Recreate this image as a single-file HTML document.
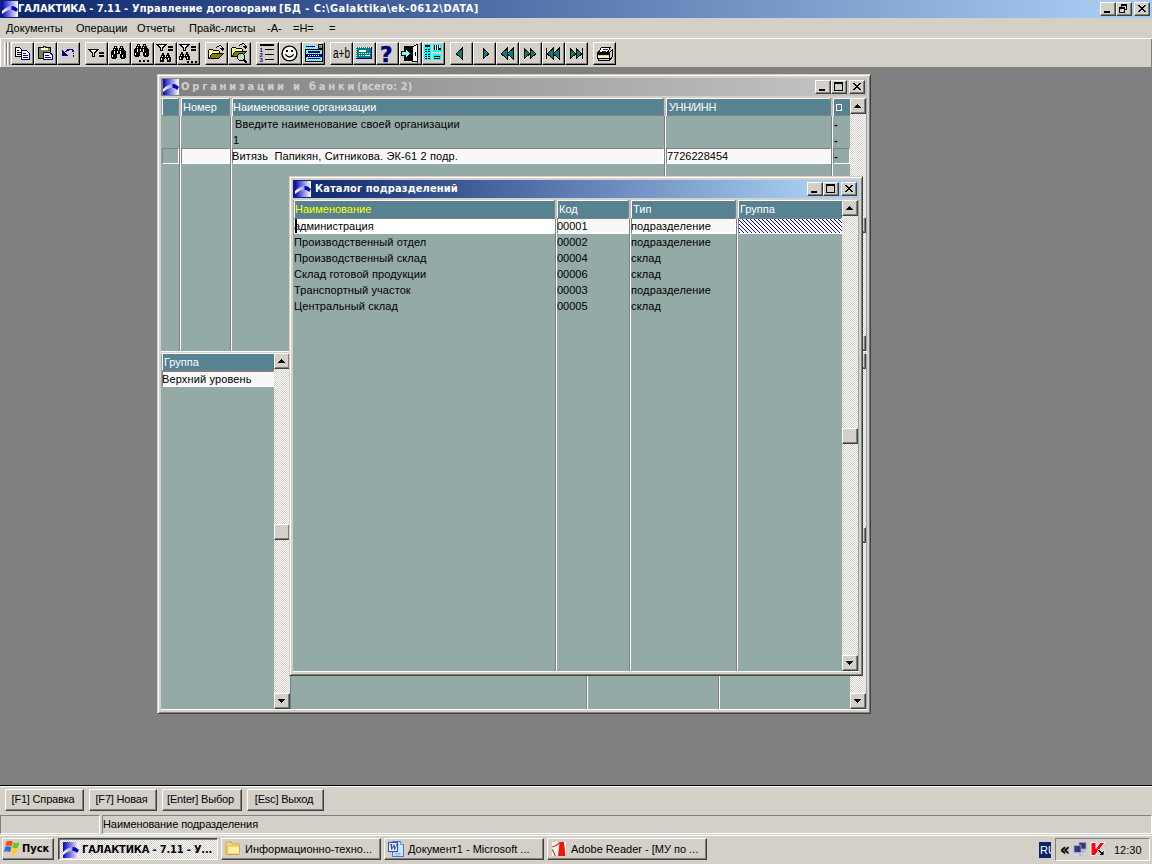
<!DOCTYPE html><html lang="ru"><head><meta charset="utf-8"><title>ГАЛАКТИКА</title><style>
html,body{margin:0;padding:0}
body{width:1152px;height:864px;overflow:hidden;background:#808080;position:relative;font:11px/14px "Liberation Sans",sans-serif;color:#000}
div,span,svg{position:absolute;box-sizing:border-box}
span{white-space:pre;line-height:14px}
.tb{font:bold 11px/14px "DejaVu Sans Condensed","Liberation Sans",sans-serif;letter-spacing:.17px}
.face{background:#d4d0c8}
.btn{background:#d4d0c8;border:1px solid;border-color:#fff #404040 #404040 #fff;box-shadow:inset -1px -1px 0 #808080}
.tbtn{background:#d4d0c8;border:1px solid;border-color:#fff #000 #000 #fff;box-shadow:inset -1px -1px 0 #808080}
.win{background:#d4d0c8;border:1px solid;border-color:#d4d0c8 #404040 #404040 #d4d0c8;box-shadow:inset 1px 1px 0 #fff,inset -1px -1px 0 #808080}
.sunk{border:1px solid;border-color:#808080 #fff #fff #808080}
.track{background:repeating-conic-gradient(#fff 0 25%,#d4d0c8 0 50%) 0 0/2px 2px}
.hd{background:#568292}
.bd{background:#94aaa6}
.w{color:#fff}
</style></head><body>
<div style="left:0px;top:0px;width:1152px;height:18px;background:linear-gradient(90deg,#0a246a 0,#a6caf0 1100px)"></div>
<svg style="left:2px;top:1px" width="16" height="16" viewBox="0 0 16 16"><defs><linearGradient id="g0" x1="0" x2="1" y1="0" y2="0"><stop offset="0" stop-color="#0404c0"/><stop offset="1" stop-color="#ffffff"/></linearGradient><linearGradient id="g0b" x1="0" x2="1" y1="0" y2="0"><stop offset="0" stop-color="#ffffff"/><stop offset="1" stop-color="#9898e0"/></linearGradient></defs><rect width="16" height="16" fill="url(#g0)"/><path d="M0 10C3 7.200 6.500 5.300 10 5L10 8.600C6.500 9 3.500 10.200 .5 12.800L0 12.800z" fill="url(#g0b)"/><path d="M9.500 5.200C11.500 4.800 13.500 6 16 8L14.200 11C12.500 9.500 11 8.800 9.500 8.800z" fill="#0404b8"/></svg>
<span class="tb w" style="left:18px;top:2px;letter-spacing:-.09px">ГАЛАКТИКА - 7.11 - </span>
<span class="tb w" style="left:132px;top:2px;">Управление договорами </span>
<span class="tb w" style="left:279px;top:2px;letter-spacing:.47px">[БД - C:\Galaktika\ek-0612\DATA]</span>
<div class="btn" style="left:1100px;top:2px;width:16px;height:14px;"><svg style="left:0;top:0" width="14" height="12" viewBox="0 0 14 12" shape-rendering="crispEdges"><rect x="3" y="8" width="6" height="2" fill="#000"/></svg></div>
<div class="btn" style="left:1116px;top:2px;width:16px;height:14px;"><svg style="left:0;top:0" width="14" height="12" viewBox="0 0 14 12" shape-rendering="crispEdges"><path d="M4 1h6v6h-2v-1h1v-3h-4v1h-1z M2 4h6v6h-6z M3 6v3h4v-3z" fill="#000" fill-rule="evenodd"/></svg></div>
<div class="btn" style="left:1134px;top:2px;width:16px;height:14px;"><svg style="left:0;top:0" width="14" height="12" viewBox="0 0 14 12" shape-rendering="crispEdges"><rect x="3" y="2" width="2" height="1" fill="#000"/><rect x="9" y="2" width="2" height="1" fill="#000"/><rect x="4" y="3" width="2" height="1" fill="#000"/><rect x="8" y="3" width="2" height="1" fill="#000"/><rect x="5" y="4" width="4" height="1" fill="#000"/><rect x="6" y="5" width="2" height="1" fill="#000"/><rect x="5" y="6" width="4" height="1" fill="#000"/><rect x="4" y="7" width="2" height="1" fill="#000"/><rect x="8" y="7" width="2" height="1" fill="#000"/><rect x="3" y="8" width="2" height="1" fill="#000"/><rect x="9" y="8" width="2" height="1" fill="#000"/></svg></div>
<div class="face" style="left:0px;top:18px;width:1152px;height:49px;"></div>
<span class="t" style="left:6px;top:21px;">Документы</span>
<span class="t" style="left:76px;top:21px;">Операции</span>
<span class="t" style="left:137px;top:21px;">Отчеты</span>
<span class="t" style="left:189px;top:21px;">Прайс-листы</span>
<span class="t" style="left:267px;top:21px;">-A-</span>
<span class="t" style="left:293px;top:21px;">=H=</span>
<span class="t" style="left:329px;top:21px;">=</span>
<div style="left:0px;top:38px;width:1152px;height:1px;background:#fff"></div>
<div style="left:0px;top:38px;width:1px;height:29px;background:#fff"></div>
<div style="left:1151px;top:39px;width:1px;height:28px;background:#808080"></div>
<div style="left:4px;top:42px;width:3px;height:23px;border-left:1px solid #fff;border-right:1px solid #808080"></div>
<div style="left:7px;top:42px;width:3px;height:23px;border-left:1px solid #fff;border-right:1px solid #808080"></div>
<div class="tbtn" style="left:11px;top:42px;width:23px;height:23px;"></div>
<div class="tbtn" style="left:34px;top:42px;width:23px;height:23px;"></div>
<div class="tbtn" style="left:57px;top:42px;width:23px;height:23px;"></div>
<div class="tbtn" style="left:85px;top:42px;width:23px;height:23px;"></div>
<div class="tbtn" style="left:108px;top:42px;width:23px;height:23px;"></div>
<div class="tbtn" style="left:131px;top:42px;width:23px;height:23px;"></div>
<div class="tbtn" style="left:154px;top:42px;width:23px;height:23px;"></div>
<div class="tbtn" style="left:177px;top:42px;width:23px;height:23px;"></div>
<div class="tbtn" style="left:205px;top:42px;width:23px;height:23px;"></div>
<div class="tbtn" style="left:228px;top:42px;width:23px;height:23px;"></div>
<div class="tbtn" style="left:256px;top:42px;width:23px;height:23px;"></div>
<div class="tbtn" style="left:279px;top:42px;width:23px;height:23px;"></div>
<div class="tbtn" style="left:302px;top:42px;width:23px;height:23px;"></div>
<div class="tbtn" style="left:330px;top:42px;width:23px;height:23px;"></div>
<div class="tbtn" style="left:353px;top:42px;width:23px;height:23px;"></div>
<div class="tbtn" style="left:376px;top:42px;width:23px;height:23px;"></div>
<div class="tbtn" style="left:399px;top:42px;width:23px;height:23px;"></div>
<div class="tbtn" style="left:422px;top:42px;width:23px;height:23px;"></div>
<div class="tbtn" style="left:450px;top:42px;width:23px;height:23px;"></div>
<div class="tbtn" style="left:473px;top:42px;width:23px;height:23px;"></div>
<div class="tbtn" style="left:496px;top:42px;width:23px;height:23px;"></div>
<div class="tbtn" style="left:519px;top:42px;width:23px;height:23px;"></div>
<div class="tbtn" style="left:542px;top:42px;width:23px;height:23px;"></div>
<div class="tbtn" style="left:565px;top:42px;width:23px;height:23px;"></div>
<div class="tbtn" style="left:593px;top:42px;width:23px;height:23px;"></div>
<svg style="left:11px;top:42px" width="23" height="23" viewBox="0 0 23 23" shape-rendering="crispEdges"><path d="M4.5 5.5h4l3 3v6h-7z" fill="#fff" stroke="#000"/><path d="M6 8.5h2M6 10.5h4M6 12.5h4" stroke="#000"/><path d="M10.5 8.5h5l3 3v6h-8z" fill="#fff" stroke="#000080"/><path d="M12 11.5h3M12 13.5h5M12 15.5h5" stroke="#000080"/></svg>
<svg style="left:34px;top:42px" width="23" height="23" viewBox="0 0 23 23" shape-rendering="crispEdges"><rect x="4.5" y="5.5" width="12" height="11" fill="#80803c" stroke="#000"/><rect x="7" y="6" width="7" height="2" fill="#fff"/><rect x="9" y="4" width="3" height="2" fill="#ffff00"/><path d="M8.5 5.5h1v-1.5h2v1.5h1" fill="none" stroke="#000" stroke-width=".8"/><path d="M9.5 10.5h6l3 2v5h-9z" fill="#fff" stroke="#000080" stroke-width="1.2"/><path d="M11 13.5h4M11 15.5h6" stroke="#000080"/></svg>
<svg style="left:57px;top:42px" width="23" height="23" viewBox="0 0 23 23" shape-rendering="crispEdges"><path d="M5 8v6h6z" fill="#000080"/><path d="M8.5 10.5C10.5 6.5 15.5 6.5 16.5 10" fill="none" stroke="#000080" stroke-width="1.3"/><rect x="16" y="10.5" width="1.2" height="1.5" fill="#000080"/><rect x="15.5" y="13" width="1.2" height="1.7" fill="#000080"/></svg>
<svg style="left:85px;top:42px" width="23" height="23" viewBox="0 0 23 23" shape-rendering="crispEdges"><rect x="3" y="7" width="11" height="1" fill="#000"/><rect x="4" y="8" width="2" height="1" fill="#000"/><rect x="6" y="8" width="5" height="1" fill="#fff"/><rect x="11" y="8" width="2" height="1" fill="#000"/><rect x="5" y="9" width="2" height="1" fill="#000"/><rect x="7" y="9" width="3" height="1" fill="#fff"/><rect x="10" y="9" width="2" height="1" fill="#000"/><rect x="6" y="10" width="2" height="1" fill="#000"/><rect x="8" y="10" width="1" height="1" fill="#fff"/><rect x="9" y="10" width="2" height="1" fill="#000"/><rect x="7" y="11" width="1" height="1" fill="#000"/><rect x="9" y="11" width="1" height="1" fill="#000"/><rect x="7" y="12" width="1" height="1" fill="#000"/><rect x="9" y="12" width="1" height="1" fill="#000"/><rect x="7" y="13" width="1" height="1" fill="#000"/><rect x="9" y="13" width="1" height="1" fill="#000"/><rect x="7" y="14" width="3" height="1" fill="#000"/><rect x="14" y="10" width="5" height="2" fill="#000"/><rect x="14" y="13" width="5" height="2" fill="#000"/></svg>
<svg style="left:108px;top:42px" width="23" height="23" viewBox="0 0 23 23" shape-rendering="crispEdges"><rect x="6" y="4" width="3" height="1" fill="#000"/><rect x="12" y="4" width="3" height="1" fill="#000"/><rect x="6" y="5" width="1" height="1" fill="#000"/><rect x="7" y="5" width="1" height="1" fill="#fff"/><rect x="8" y="5" width="1" height="1" fill="#000"/><rect x="12" y="5" width="1" height="1" fill="#000"/><rect x="13" y="5" width="1" height="1" fill="#fff"/><rect x="14" y="5" width="1" height="1" fill="#000"/><rect x="5" y="6" width="5" height="1" fill="#000"/><rect x="11" y="6" width="5" height="1" fill="#000"/><rect x="5" y="7" width="1" height="1" fill="#000"/><rect x="6" y="7" width="1" height="1" fill="#fff"/><rect x="7" y="7" width="3" height="1" fill="#000"/><rect x="11" y="7" width="1" height="1" fill="#000"/><rect x="12" y="7" width="1" height="1" fill="#fff"/><rect x="13" y="7" width="3" height="1" fill="#000"/><rect x="4" y="8" width="13" height="1" fill="#000"/><rect x="3" y="9" width="3" height="1" fill="#000"/><rect x="6" y="9" width="1" height="1" fill="#fff"/><rect x="7" y="9" width="2" height="1" fill="#000"/><rect x="9" y="9" width="1" height="1" fill="#fff"/><rect x="10" y="9" width="2" height="1" fill="#000"/><rect x="12" y="9" width="1" height="1" fill="#fff"/><rect x="13" y="9" width="5" height="1" fill="#000"/><rect x="3" y="10" width="3" height="1" fill="#000"/><rect x="6" y="10" width="1" height="1" fill="#fff"/><rect x="7" y="10" width="2" height="1" fill="#000"/><rect x="9" y="10" width="1" height="1" fill="#fff"/><rect x="10" y="10" width="2" height="1" fill="#000"/><rect x="12" y="10" width="1" height="1" fill="#fff"/><rect x="13" y="10" width="5" height="1" fill="#000"/><rect x="3" y="11" width="3" height="1" fill="#000"/><rect x="6" y="11" width="1" height="1" fill="#fff"/><rect x="7" y="11" width="5" height="1" fill="#000"/><rect x="12" y="11" width="1" height="1" fill="#fff"/><rect x="13" y="11" width="5" height="1" fill="#000"/><rect x="3" y="12" width="6" height="1" fill="#000"/><rect x="12" y="12" width="6" height="1" fill="#000"/><rect x="3" y="13" width="1" height="1" fill="#000"/><rect x="4" y="13" width="1" height="1" fill="#fff"/><rect x="5" y="13" width="4" height="1" fill="#000"/><rect x="12" y="13" width="2" height="1" fill="#000"/><rect x="14" y="13" width="1" height="1" fill="#fff"/><rect x="15" y="13" width="3" height="1" fill="#000"/><rect x="3" y="14" width="1" height="1" fill="#000"/><rect x="4" y="14" width="1" height="1" fill="#fff"/><rect x="5" y="14" width="4" height="1" fill="#000"/><rect x="12" y="14" width="2" height="1" fill="#000"/><rect x="14" y="14" width="1" height="1" fill="#fff"/><rect x="15" y="14" width="3" height="1" fill="#000"/><rect x="3" y="15" width="6" height="1" fill="#000"/><rect x="12" y="15" width="6" height="1" fill="#000"/><rect x="4" y="16" width="4" height="1" fill="#000"/><rect x="13" y="16" width="4" height="1" fill="#000"/></svg>
<svg style="left:131px;top:42px" width="23" height="23" viewBox="0 0 23 23" shape-rendering="crispEdges"><rect x="6" y="2" width="3" height="1" fill="#000"/><rect x="12" y="2" width="3" height="1" fill="#000"/><rect x="6" y="3" width="1" height="1" fill="#000"/><rect x="7" y="3" width="1" height="1" fill="#fff"/><rect x="8" y="3" width="1" height="1" fill="#000"/><rect x="12" y="3" width="1" height="1" fill="#000"/><rect x="13" y="3" width="1" height="1" fill="#fff"/><rect x="14" y="3" width="1" height="1" fill="#000"/><rect x="5" y="4" width="5" height="1" fill="#000"/><rect x="11" y="4" width="5" height="1" fill="#000"/><rect x="5" y="5" width="1" height="1" fill="#000"/><rect x="6" y="5" width="1" height="1" fill="#fff"/><rect x="7" y="5" width="3" height="1" fill="#000"/><rect x="11" y="5" width="1" height="1" fill="#000"/><rect x="12" y="5" width="1" height="1" fill="#fff"/><rect x="13" y="5" width="3" height="1" fill="#000"/><rect x="4" y="6" width="13" height="1" fill="#000"/><rect x="3" y="7" width="3" height="1" fill="#000"/><rect x="6" y="7" width="1" height="1" fill="#fff"/><rect x="7" y="7" width="2" height="1" fill="#000"/><rect x="9" y="7" width="1" height="1" fill="#fff"/><rect x="10" y="7" width="2" height="1" fill="#000"/><rect x="12" y="7" width="1" height="1" fill="#fff"/><rect x="13" y="7" width="5" height="1" fill="#000"/><rect x="3" y="8" width="3" height="1" fill="#000"/><rect x="6" y="8" width="1" height="1" fill="#fff"/><rect x="7" y="8" width="2" height="1" fill="#000"/><rect x="9" y="8" width="1" height="1" fill="#fff"/><rect x="10" y="8" width="2" height="1" fill="#000"/><rect x="12" y="8" width="1" height="1" fill="#fff"/><rect x="13" y="8" width="5" height="1" fill="#000"/><rect x="3" y="9" width="3" height="1" fill="#000"/><rect x="6" y="9" width="1" height="1" fill="#fff"/><rect x="7" y="9" width="5" height="1" fill="#000"/><rect x="12" y="9" width="1" height="1" fill="#fff"/><rect x="13" y="9" width="5" height="1" fill="#000"/><rect x="3" y="10" width="6" height="1" fill="#000"/><rect x="12" y="10" width="6" height="1" fill="#000"/><rect x="3" y="11" width="1" height="1" fill="#000"/><rect x="4" y="11" width="1" height="1" fill="#fff"/><rect x="5" y="11" width="4" height="1" fill="#000"/><rect x="12" y="11" width="2" height="1" fill="#000"/><rect x="14" y="11" width="1" height="1" fill="#fff"/><rect x="15" y="11" width="3" height="1" fill="#000"/><rect x="3" y="12" width="1" height="1" fill="#000"/><rect x="4" y="12" width="1" height="1" fill="#fff"/><rect x="5" y="12" width="4" height="1" fill="#000"/><rect x="12" y="12" width="2" height="1" fill="#000"/><rect x="14" y="12" width="1" height="1" fill="#fff"/><rect x="15" y="12" width="3" height="1" fill="#000"/><rect x="3" y="13" width="6" height="1" fill="#000"/><rect x="12" y="13" width="6" height="1" fill="#000"/><rect x="4" y="14" width="4" height="1" fill="#000"/><rect x="13" y="14" width="4" height="1" fill="#000"/><rect x="8" y="18" width="2" height="2" fill="#000"/><rect x="12" y="18" width="2" height="2" fill="#000"/><rect x="16" y="18" width="2" height="2" fill="#000"/></svg>
<svg style="left:154px;top:42px" width="23" height="23" viewBox="0 0 23 23" shape-rendering="crispEdges"><rect x="2" y="2" width="11" height="1" fill="#000"/><rect x="3" y="3" width="2" height="1" fill="#000"/><rect x="5" y="3" width="5" height="1" fill="#fff"/><rect x="10" y="3" width="2" height="1" fill="#000"/><rect x="4" y="4" width="2" height="1" fill="#000"/><rect x="6" y="4" width="3" height="1" fill="#fff"/><rect x="9" y="4" width="2" height="1" fill="#000"/><rect x="5" y="5" width="2" height="1" fill="#000"/><rect x="7" y="5" width="1" height="1" fill="#fff"/><rect x="8" y="5" width="2" height="1" fill="#000"/><rect x="6" y="6" width="1" height="1" fill="#000"/><rect x="8" y="6" width="1" height="1" fill="#000"/><rect x="6" y="7" width="1" height="1" fill="#000"/><rect x="8" y="7" width="1" height="1" fill="#000"/><rect x="6" y="8" width="3" height="1" fill="#000"/><rect x="14" y="4" width="5" height="2" fill="#000"/><rect x="14" y="7" width="5" height="2" fill="#000"/><rect x="8" y="11" width="2" height="1" fill="#000"/><rect x="13" y="11" width="2" height="1" fill="#000"/><rect x="8" y="12" width="2" height="1" fill="#000"/><rect x="13" y="12" width="2" height="1" fill="#000"/><rect x="7" y="13" width="4" height="1" fill="#000"/><rect x="12" y="13" width="4" height="1" fill="#000"/><rect x="7" y="14" width="1" height="1" fill="#000"/><rect x="8" y="14" width="1" height="1" fill="#fff"/><rect x="9" y="14" width="2" height="1" fill="#000"/><rect x="12" y="14" width="1" height="1" fill="#000"/><rect x="13" y="14" width="1" height="1" fill="#fff"/><rect x="14" y="14" width="2" height="1" fill="#000"/><rect x="6" y="15" width="11" height="1" fill="#000"/><rect x="6" y="16" width="1" height="1" fill="#000"/><rect x="7" y="16" width="1" height="1" fill="#fff"/><rect x="8" y="16" width="3" height="1" fill="#000"/><rect x="12" y="16" width="2" height="1" fill="#000"/><rect x="14" y="16" width="1" height="1" fill="#fff"/><rect x="15" y="16" width="2" height="1" fill="#000"/><rect x="6" y="17" width="1" height="1" fill="#000"/><rect x="7" y="17" width="1" height="1" fill="#fff"/><rect x="8" y="17" width="2" height="1" fill="#000"/><rect x="13" y="17" width="1" height="1" fill="#000"/><rect x="14" y="17" width="1" height="1" fill="#fff"/><rect x="15" y="17" width="2" height="1" fill="#000"/><rect x="6" y="18" width="4" height="1" fill="#000"/><rect x="13" y="18" width="4" height="1" fill="#000"/><rect x="6" y="19" width="4" height="1" fill="#000"/><rect x="13" y="19" width="4" height="1" fill="#000"/></svg>
<svg style="left:177px;top:42px" width="23" height="23" viewBox="0 0 23 23" shape-rendering="crispEdges"><rect x="2" y="2" width="11" height="1" fill="#000"/><rect x="3" y="3" width="2" height="1" fill="#000"/><rect x="5" y="3" width="5" height="1" fill="#fff"/><rect x="10" y="3" width="2" height="1" fill="#000"/><rect x="4" y="4" width="2" height="1" fill="#000"/><rect x="6" y="4" width="3" height="1" fill="#fff"/><rect x="9" y="4" width="2" height="1" fill="#000"/><rect x="5" y="5" width="2" height="1" fill="#000"/><rect x="7" y="5" width="1" height="1" fill="#fff"/><rect x="8" y="5" width="2" height="1" fill="#000"/><rect x="6" y="6" width="1" height="1" fill="#000"/><rect x="8" y="6" width="1" height="1" fill="#000"/><rect x="6" y="7" width="1" height="1" fill="#000"/><rect x="8" y="7" width="1" height="1" fill="#000"/><rect x="6" y="8" width="3" height="1" fill="#000"/><rect x="14" y="4" width="5" height="2" fill="#000"/><rect x="14" y="7" width="5" height="2" fill="#000"/><rect x="4" y="10" width="2" height="1" fill="#000"/><rect x="9" y="10" width="2" height="1" fill="#000"/><rect x="4" y="11" width="2" height="1" fill="#000"/><rect x="9" y="11" width="2" height="1" fill="#000"/><rect x="3" y="12" width="4" height="1" fill="#000"/><rect x="8" y="12" width="4" height="1" fill="#000"/><rect x="3" y="13" width="1" height="1" fill="#000"/><rect x="4" y="13" width="1" height="1" fill="#fff"/><rect x="5" y="13" width="2" height="1" fill="#000"/><rect x="8" y="13" width="1" height="1" fill="#000"/><rect x="9" y="13" width="1" height="1" fill="#fff"/><rect x="10" y="13" width="2" height="1" fill="#000"/><rect x="2" y="14" width="11" height="1" fill="#000"/><rect x="2" y="15" width="1" height="1" fill="#000"/><rect x="3" y="15" width="1" height="1" fill="#fff"/><rect x="4" y="15" width="3" height="1" fill="#000"/><rect x="8" y="15" width="2" height="1" fill="#000"/><rect x="10" y="15" width="1" height="1" fill="#fff"/><rect x="11" y="15" width="2" height="1" fill="#000"/><rect x="2" y="16" width="1" height="1" fill="#000"/><rect x="3" y="16" width="1" height="1" fill="#fff"/><rect x="4" y="16" width="2" height="1" fill="#000"/><rect x="9" y="16" width="1" height="1" fill="#000"/><rect x="10" y="16" width="1" height="1" fill="#fff"/><rect x="11" y="16" width="2" height="1" fill="#000"/><rect x="2" y="17" width="4" height="1" fill="#000"/><rect x="9" y="17" width="4" height="1" fill="#000"/><rect x="10" y="19" width="2" height="2" fill="#000"/><rect x="14" y="19" width="2" height="2" fill="#000"/><rect x="18" y="19" width="2" height="2" fill="#000"/></svg>
<svg style="left:205px;top:42px" width="23" height="23" viewBox="0 0 23 23" shape-rendering="crispEdges"><rect x="4" y="7" width="4" height="1" fill="#000"/><rect x="3" y="8" width="1" height="1" fill="#000"/><rect x="4" y="8" width="4" height="1" fill="#ffff80"/><rect x="8" y="8" width="6" height="1" fill="#000"/><rect x="3" y="9" width="1" height="1" fill="#000"/><rect x="4" y="9" width="10" height="1" fill="#ffff80"/><rect x="14" y="9" width="1" height="1" fill="#000"/><rect x="3" y="10" width="1" height="1" fill="#000"/><rect x="4" y="10" width="10" height="1" fill="#ffff80"/><rect x="14" y="10" width="1" height="1" fill="#000"/><rect x="3" y="11" width="1" height="1" fill="#000"/><rect x="4" y="11" width="3" height="1" fill="#ffff80"/><rect x="7" y="11" width="12" height="1" fill="#000"/><rect x="3" y="12" width="1" height="1" fill="#000"/><rect x="4" y="12" width="2" height="1" fill="#ffff80"/><rect x="6" y="12" width="1" height="1" fill="#000"/><rect x="7" y="12" width="10" height="1" fill="#808000"/><rect x="17" y="12" width="1" height="1" fill="#000"/><rect x="3" y="13" width="1" height="1" fill="#000"/><rect x="4" y="13" width="1" height="1" fill="#ffff80"/><rect x="5" y="13" width="1" height="1" fill="#000"/><rect x="6" y="13" width="10" height="1" fill="#808000"/><rect x="16" y="13" width="1" height="1" fill="#000"/><rect x="3" y="14" width="1" height="1" fill="#000"/><rect x="4" y="14" width="1" height="1" fill="#ffff80"/><rect x="5" y="14" width="1" height="1" fill="#000"/><rect x="6" y="14" width="9" height="1" fill="#808000"/><rect x="15" y="14" width="1" height="1" fill="#000"/><rect x="3" y="15" width="2" height="1" fill="#000"/><rect x="5" y="15" width="9" height="1" fill="#808000"/><rect x="14" y="15" width="1" height="1" fill="#000"/><rect x="3" y="16" width="11" height="1" fill="#000"/><rect x="14" y="3" width="2" height="1" fill="#000"/><rect x="12" y="4" width="2" height="1" fill="#000"/><rect x="16" y="4" width="1" height="1" fill="#000"/><rect x="11" y="5" width="1" height="1" fill="#000"/><rect x="17" y="5" width="1" height="1" fill="#000"/><rect x="15" y="6" width="4" height="1" fill="#000"/><rect x="16" y="7" width="3" height="1" fill="#000"/><rect x="17" y="8" width="1" height="1" fill="#000"/></svg>
<svg style="left:228px;top:42px" width="23" height="23" viewBox="0 0 23 23" shape-rendering="crispEdges"><rect x="4" y="5" width="4" height="1" fill="#000"/><rect x="3" y="6" width="1" height="1" fill="#000"/><rect x="4" y="6" width="4" height="1" fill="#ffff80"/><rect x="8" y="6" width="6" height="1" fill="#000"/><rect x="3" y="7" width="1" height="1" fill="#000"/><rect x="4" y="7" width="10" height="1" fill="#ffff80"/><rect x="14" y="7" width="1" height="1" fill="#000"/><rect x="3" y="8" width="1" height="1" fill="#000"/><rect x="4" y="8" width="10" height="1" fill="#ffff80"/><rect x="14" y="8" width="1" height="1" fill="#000"/><rect x="3" y="9" width="1" height="1" fill="#000"/><rect x="4" y="9" width="3" height="1" fill="#ffff80"/><rect x="7" y="9" width="12" height="1" fill="#000"/><rect x="3" y="10" width="1" height="1" fill="#000"/><rect x="4" y="10" width="2" height="1" fill="#ffff80"/><rect x="6" y="10" width="1" height="1" fill="#000"/><rect x="7" y="10" width="10" height="1" fill="#808000"/><rect x="17" y="10" width="1" height="1" fill="#000"/><rect x="3" y="11" width="1" height="1" fill="#000"/><rect x="4" y="11" width="1" height="1" fill="#ffff80"/><rect x="5" y="11" width="1" height="1" fill="#000"/><rect x="6" y="11" width="10" height="1" fill="#808000"/><rect x="16" y="11" width="1" height="1" fill="#000"/><rect x="3" y="12" width="1" height="1" fill="#000"/><rect x="4" y="12" width="1" height="1" fill="#ffff80"/><rect x="5" y="12" width="1" height="1" fill="#000"/><rect x="6" y="12" width="9" height="1" fill="#808000"/><rect x="15" y="12" width="1" height="1" fill="#000"/><rect x="3" y="13" width="2" height="1" fill="#000"/><rect x="5" y="13" width="9" height="1" fill="#808000"/><rect x="14" y="13" width="1" height="1" fill="#000"/><rect x="3" y="14" width="11" height="1" fill="#000"/><rect x="14" y="1" width="2" height="1" fill="#000"/><rect x="12" y="2" width="2" height="1" fill="#000"/><rect x="16" y="2" width="1" height="1" fill="#000"/><rect x="11" y="3" width="1" height="1" fill="#000"/><rect x="17" y="3" width="1" height="1" fill="#000"/><rect x="15" y="4" width="4" height="1" fill="#000"/><rect x="16" y="5" width="3" height="1" fill="#000"/><rect x="17" y="6" width="1" height="1" fill="#000"/><circle cx="13" cy="15" r="3.5" fill="#d4d0c8" stroke="#000"/><path d="M10.5 14a2.5 2.5 0 0 1 2-2v2z" fill="#00ffff"/><rect x="14" y="16" width="1" height="1" fill="#00ffff"/><path d="M15.5 17.5l3.5 3" stroke="#000" stroke-width="2"/></svg>
<svg style="left:256px;top:42px" width="23" height="23" viewBox="0 0 23 23" shape-rendering="crispEdges"><rect x="4" y="2" width="14" height="2" fill="#000"/><path d="M9 7.5h9M9 12.5h9M9 17.5h9" stroke="#000"/><text x="3.5" y="10" font-family="Liberation Sans,sans-serif" font-weight="bold" font-size="6" fill="#000080">1</text><text x="3.5" y="15" font-family="Liberation Sans,sans-serif" font-weight="bold" font-size="6" fill="#000080">2</text><text x="3.5" y="20" font-family="Liberation Sans,sans-serif" font-weight="bold" font-size="6" fill="#000080">3</text></svg>
<svg style="left:279px;top:42px" width="23" height="23" viewBox="0 0 23 23" shape-rendering="crispEdges"><circle cx="10.5" cy="11.5" r="7.4" fill="#fff" stroke="#000" stroke-width="1.4" shape-rendering="auto"/><rect x="7" y="8" width="2" height="2" fill="#000"/><rect x="12" y="8" width="2" height="2" fill="#000"/><path d="M6.3 12.3q4.2 5.4 8.4 0" fill="none" stroke="#000" stroke-width="1.3" shape-rendering="auto"/></svg>
<svg style="left:302px;top:42px" width="23" height="23" viewBox="0 0 23 23" shape-rendering="crispEdges"><rect x="16" y="2" width="5" height="1" fill="#000"/><rect x="2" y="3" width="1" height="1" fill="#00ffff"/><rect x="3" y="3" width="1" height="1" fill="#fff"/><rect x="4" y="3" width="1" height="1" fill="#00ffff"/><rect x="5" y="3" width="1" height="1" fill="#fff"/><rect x="6" y="3" width="1" height="1" fill="#00ffff"/><rect x="7" y="3" width="1" height="1" fill="#fff"/><rect x="8" y="3" width="1" height="1" fill="#00ffff"/><rect x="9" y="3" width="1" height="1" fill="#fff"/><rect x="10" y="3" width="1" height="1" fill="#00ffff"/><rect x="11" y="3" width="1" height="1" fill="#fff"/><rect x="12" y="3" width="1" height="1" fill="#00ffff"/><rect x="13" y="3" width="1" height="1" fill="#fff"/><rect x="14" y="3" width="1" height="1" fill="#00ffff"/><rect x="16" y="3" width="1" height="1" fill="#000"/><rect x="17" y="3" width="2" height="1" fill="#808080"/><rect x="19" y="3" width="1" height="1" fill="#fff"/><rect x="20" y="3" width="1" height="1" fill="#000"/><rect x="2" y="4" width="1" height="1" fill="#fff"/><rect x="3" y="4" width="1" height="1" fill="#00ffff"/><rect x="4" y="4" width="9" height="1" fill="#000080"/><rect x="13" y="4" width="1" height="1" fill="#00ffff"/><rect x="14" y="4" width="1" height="1" fill="#fff"/><rect x="16" y="4" width="1" height="1" fill="#000"/><rect x="17" y="4" width="3" height="1" fill="#808080"/><rect x="20" y="4" width="1" height="1" fill="#000"/><rect x="2" y="5" width="1" height="1" fill="#00ffff"/><rect x="3" y="5" width="1" height="1" fill="#fff"/><rect x="4" y="5" width="1" height="1" fill="#00ffff"/><rect x="5" y="5" width="1" height="1" fill="#fff"/><rect x="6" y="5" width="1" height="1" fill="#00ffff"/><rect x="7" y="5" width="1" height="1" fill="#fff"/><rect x="8" y="5" width="1" height="1" fill="#00ffff"/><rect x="9" y="5" width="1" height="1" fill="#fff"/><rect x="10" y="5" width="1" height="1" fill="#00ffff"/><rect x="11" y="5" width="1" height="1" fill="#fff"/><rect x="12" y="5" width="1" height="1" fill="#00ffff"/><rect x="13" y="5" width="1" height="1" fill="#fff"/><rect x="14" y="5" width="1" height="1" fill="#00ffff"/><rect x="16" y="5" width="1" height="1" fill="#000"/><rect x="17" y="5" width="3" height="1" fill="#808080"/><rect x="20" y="5" width="1" height="1" fill="#000"/><rect x="2" y="6" width="1" height="1" fill="#fff"/><rect x="3" y="6" width="1" height="1" fill="#00ffff"/><rect x="4" y="6" width="1" height="1" fill="#fff"/><rect x="5" y="6" width="1" height="1" fill="#00ffff"/><rect x="6" y="6" width="1" height="1" fill="#fff"/><rect x="7" y="6" width="1" height="1" fill="#00ffff"/><rect x="8" y="6" width="1" height="1" fill="#fff"/><rect x="9" y="6" width="1" height="1" fill="#00ffff"/><rect x="10" y="6" width="1" height="1" fill="#fff"/><rect x="11" y="6" width="1" height="1" fill="#00ffff"/><rect x="12" y="6" width="1" height="1" fill="#fff"/><rect x="13" y="6" width="1" height="1" fill="#00ffff"/><rect x="14" y="6" width="1" height="1" fill="#fff"/><rect x="16" y="6" width="5" height="1" fill="#000"/><rect x="3" y="7" width="18" height="1" fill="#000"/><rect x="3" y="8" width="1" height="1" fill="#000"/><rect x="4" y="8" width="1" height="1" fill="#00ffff"/><rect x="5" y="8" width="1" height="1" fill="#fff"/><rect x="6" y="8" width="1" height="1" fill="#00ffff"/><rect x="7" y="8" width="1" height="1" fill="#fff"/><rect x="8" y="8" width="1" height="1" fill="#00ffff"/><rect x="9" y="8" width="1" height="1" fill="#fff"/><rect x="10" y="8" width="1" height="1" fill="#00ffff"/><rect x="11" y="8" width="1" height="1" fill="#fff"/><rect x="12" y="8" width="1" height="1" fill="#00ffff"/><rect x="13" y="8" width="1" height="1" fill="#fff"/><rect x="14" y="8" width="1" height="1" fill="#00ffff"/><rect x="15" y="8" width="1" height="1" fill="#fff"/><rect x="16" y="8" width="1" height="1" fill="#00ffff"/><rect x="17" y="8" width="1" height="1" fill="#fff"/><rect x="18" y="8" width="1" height="1" fill="#00ffff"/><rect x="19" y="8" width="1" height="1" fill="#fff"/><rect x="20" y="8" width="1" height="1" fill="#000"/><rect x="3" y="9" width="1" height="1" fill="#000"/><rect x="4" y="9" width="1" height="1" fill="#fff"/><rect x="5" y="9" width="1" height="1" fill="#00ffff"/><rect x="6" y="9" width="12" height="1" fill="#000080"/><rect x="18" y="9" width="1" height="1" fill="#00ffff"/><rect x="19" y="9" width="1" height="1" fill="#fff"/><rect x="20" y="9" width="1" height="1" fill="#000"/><rect x="3" y="10" width="1" height="1" fill="#000"/><rect x="4" y="10" width="1" height="1" fill="#00ffff"/><rect x="5" y="10" width="1" height="1" fill="#fff"/><rect x="6" y="10" width="12" height="1" fill="#000080"/><rect x="18" y="10" width="1" height="1" fill="#fff"/><rect x="19" y="10" width="1" height="1" fill="#00ffff"/><rect x="20" y="10" width="1" height="1" fill="#000"/><rect x="3" y="11" width="1" height="1" fill="#000"/><rect x="4" y="11" width="1" height="1" fill="#fff"/><rect x="5" y="11" width="1" height="1" fill="#00ffff"/><rect x="6" y="11" width="1" height="1" fill="#fff"/><rect x="7" y="11" width="1" height="1" fill="#00ffff"/><rect x="8" y="11" width="1" height="1" fill="#fff"/><rect x="9" y="11" width="1" height="1" fill="#00ffff"/><rect x="10" y="11" width="1" height="1" fill="#fff"/><rect x="11" y="11" width="1" height="1" fill="#00ffff"/><rect x="12" y="11" width="1" height="1" fill="#fff"/><rect x="13" y="11" width="1" height="1" fill="#00ffff"/><rect x="14" y="11" width="1" height="1" fill="#fff"/><rect x="15" y="11" width="1" height="1" fill="#00ffff"/><rect x="16" y="11" width="1" height="1" fill="#fff"/><rect x="17" y="11" width="1" height="1" fill="#00ffff"/><rect x="18" y="11" width="1" height="1" fill="#fff"/><rect x="19" y="11" width="1" height="1" fill="#00ffff"/><rect x="20" y="11" width="1" height="1" fill="#000"/><rect x="3" y="12" width="1" height="1" fill="#000"/><rect x="4" y="12" width="16" height="1" fill="#000080"/><rect x="20" y="12" width="1" height="1" fill="#000"/><rect x="3" y="13" width="1" height="1" fill="#000"/><rect x="4" y="13" width="2" height="1" fill="#000080"/><rect x="6" y="13" width="1" height="1" fill="#fff"/><rect x="7" y="13" width="1" height="1" fill="#000080"/><rect x="8" y="13" width="1" height="1" fill="#fff"/><rect x="9" y="13" width="1" height="1" fill="#000080"/><rect x="10" y="13" width="1" height="1" fill="#fff"/><rect x="11" y="13" width="1" height="1" fill="#000080"/><rect x="12" y="13" width="1" height="1" fill="#fff"/><rect x="13" y="13" width="1" height="1" fill="#000080"/><rect x="14" y="13" width="1" height="1" fill="#fff"/><rect x="15" y="13" width="1" height="1" fill="#000080"/><rect x="16" y="13" width="1" height="1" fill="#fff"/><rect x="17" y="13" width="3" height="1" fill="#000080"/><rect x="20" y="13" width="1" height="1" fill="#000"/><rect x="3" y="14" width="1" height="1" fill="#000"/><rect x="4" y="14" width="16" height="1" fill="#000080"/><rect x="20" y="14" width="1" height="1" fill="#000"/><rect x="3" y="15" width="1" height="1" fill="#000"/><rect x="4" y="15" width="1" height="1" fill="#00ffff"/><rect x="5" y="15" width="1" height="1" fill="#fff"/><rect x="6" y="15" width="1" height="1" fill="#00ffff"/><rect x="7" y="15" width="1" height="1" fill="#fff"/><rect x="8" y="15" width="1" height="1" fill="#00ffff"/><rect x="9" y="15" width="1" height="1" fill="#fff"/><rect x="10" y="15" width="1" height="1" fill="#00ffff"/><rect x="11" y="15" width="1" height="1" fill="#fff"/><rect x="12" y="15" width="1" height="1" fill="#00ffff"/><rect x="13" y="15" width="1" height="1" fill="#fff"/><rect x="14" y="15" width="1" height="1" fill="#00ffff"/><rect x="15" y="15" width="1" height="1" fill="#fff"/><rect x="16" y="15" width="1" height="1" fill="#00ffff"/><rect x="17" y="15" width="1" height="1" fill="#fff"/><rect x="18" y="15" width="1" height="1" fill="#00ffff"/><rect x="19" y="15" width="1" height="1" fill="#fff"/><rect x="20" y="15" width="1" height="1" fill="#000"/><rect x="3" y="16" width="1" height="1" fill="#000"/><rect x="4" y="16" width="1" height="1" fill="#fff"/><rect x="5" y="16" width="1" height="1" fill="#00ffff"/><rect x="6" y="16" width="12" height="1" fill="#000080"/><rect x="18" y="16" width="1" height="1" fill="#00ffff"/><rect x="19" y="16" width="1" height="1" fill="#fff"/><rect x="20" y="16" width="1" height="1" fill="#000"/><rect x="3" y="17" width="1" height="1" fill="#000"/><rect x="4" y="17" width="1" height="1" fill="#00ffff"/><rect x="5" y="17" width="1" height="1" fill="#fff"/><rect x="6" y="17" width="1" height="1" fill="#00ffff"/><rect x="7" y="17" width="1" height="1" fill="#fff"/><rect x="8" y="17" width="1" height="1" fill="#00ffff"/><rect x="9" y="17" width="1" height="1" fill="#fff"/><rect x="10" y="17" width="1" height="1" fill="#00ffff"/><rect x="11" y="17" width="1" height="1" fill="#fff"/><rect x="12" y="17" width="1" height="1" fill="#00ffff"/><rect x="13" y="17" width="1" height="1" fill="#fff"/><rect x="14" y="17" width="1" height="1" fill="#00ffff"/><rect x="15" y="17" width="1" height="1" fill="#fff"/><rect x="16" y="17" width="1" height="1" fill="#00ffff"/><rect x="17" y="17" width="1" height="1" fill="#fff"/><rect x="18" y="17" width="1" height="1" fill="#00ffff"/><rect x="19" y="17" width="1" height="1" fill="#fff"/><rect x="20" y="17" width="1" height="1" fill="#000"/><rect x="3" y="18" width="1" height="1" fill="#000"/><rect x="4" y="18" width="1" height="1" fill="#fff"/><rect x="5" y="18" width="1" height="1" fill="#00ffff"/><rect x="6" y="18" width="1" height="1" fill="#fff"/><rect x="7" y="18" width="1" height="1" fill="#00ffff"/><rect x="8" y="18" width="1" height="1" fill="#fff"/><rect x="9" y="18" width="1" height="1" fill="#00ffff"/><rect x="10" y="18" width="1" height="1" fill="#fff"/><rect x="11" y="18" width="1" height="1" fill="#00ffff"/><rect x="12" y="18" width="1" height="1" fill="#fff"/><rect x="13" y="18" width="1" height="1" fill="#00ffff"/><rect x="14" y="18" width="1" height="1" fill="#fff"/><rect x="15" y="18" width="1" height="1" fill="#00ffff"/><rect x="16" y="18" width="1" height="1" fill="#fff"/><rect x="17" y="18" width="1" height="1" fill="#00ffff"/><rect x="18" y="18" width="1" height="1" fill="#fff"/><rect x="19" y="18" width="1" height="1" fill="#00ffff"/><rect x="20" y="18" width="1" height="1" fill="#000"/><rect x="3" y="19" width="18" height="1" fill="#000"/></svg>
<svg style="left:330px;top:42px" width="23" height="23" viewBox="0 0 23 23" shape-rendering="crispEdges"><text x="3" y="16" font-family="Liberation Sans,sans-serif" font-size="14" textLength="17" lengthAdjust="spacingAndGlyphs" fill="#000" shape-rendering="auto">a+b</text></svg>
<svg style="left:353px;top:42px" width="23" height="23" viewBox="0 0 23 23" shape-rendering="crispEdges"><rect x="3" y="5" width="16" height="12" fill="#000080"/><rect x="3" y="5" width="15" height="11" fill="#008080"/><path d="M3.5 16v-10.5h14.5" fill="none" stroke="#fff" stroke-dasharray="1 1"/><rect x="6" y="8" width="7" height="2" fill="#fff"/><path d="M6 11.5h11M6 13.5h11" stroke="#fff" stroke-dasharray="1 1"/><rect x="13" y="13" width="4" height="1" fill="#fff"/><rect x="5" y="16" width="13" height="1" fill="#000080"/></svg>
<svg style="left:376px;top:42px" width="23" height="23" viewBox="0 0 23 23" shape-rendering="crispEdges"><text x="4" y="20" font-family="DejaVu Sans,Liberation Sans,sans-serif" font-weight="bold" font-size="22" textLength="12.5" lengthAdjust="spacingAndGlyphs" fill="#000080" stroke="#000080" stroke-width=".5" shape-rendering="auto">?</text></svg>
<svg style="left:399px;top:42px" width="23" height="23" viewBox="0 0 23 23" shape-rendering="crispEdges"><rect x="5" y="4" width="9" height="15" fill="#000"/><path d="M13.5 4.5l5-2v17.5l-5-1z" fill="#fff" stroke="#000"/><rect x="16" y="10" width="1" height="4" fill="#000"/><path d="M2.5 9.5h4v-3l5 5l-5 5v-3h-4z" fill="#80ffff" stroke="#000" stroke-width="1"/></svg>
<svg style="left:422px;top:42px" width="23" height="23" viewBox="0 0 23 23" shape-rendering="crispEdges"><rect x="2" y="2" width="7" height="16" fill="#00ffff"/><rect x="3" y="3" width="5" height="2" fill="#000"/><path d="M3 7.5h5M3 9.5h5M3 12.5h5M3 14.5h5M3 16.5h5" stroke="#000" stroke-dasharray="2 1"/><rect x="11" y="2" width="9" height="8" fill="#00ffff"/><rect x="12" y="3" width="6" height="5" fill="#fff"/><path d="M12.5 3v5M14.5 3v5M16.5 3v5" stroke="#000"/><rect x="17" y="6" width="2" height="2" fill="#000"/><rect x="11" y="12" width="8" height="6" fill="#00ffff"/><path d="M12 14.5h6M12 16.5h6" stroke="#000"/></svg>
<svg style="left:450px;top:42px" width="23" height="23" viewBox="0 0 23 23" shape-rendering="crispEdges"><path d="M12 6.5v10.5l-5.7-5.25z" fill="#008080" stroke="#000" stroke-width="1" stroke-linejoin="miter"/></svg>
<svg style="left:473px;top:42px" width="23" height="23" viewBox="0 0 23 23" shape-rendering="crispEdges"><path d="M10 6.5v10.5l5.7-5.25z" fill="#008080" stroke="#000" stroke-width="1" stroke-linejoin="miter"/></svg>
<svg style="left:496px;top:42px" width="23" height="23" viewBox="0 0 23 23" shape-rendering="crispEdges"><path d="M11 6.5v10.5l-5.7-5.25z" fill="#008080" stroke="#000" stroke-width="1" stroke-linejoin="miter"/><path d="M17 6.5v10.5l-5.7-5.25z" fill="#008080" stroke="#000" stroke-width="1" stroke-linejoin="miter"/></svg>
<svg style="left:519px;top:42px" width="23" height="23" viewBox="0 0 23 23" shape-rendering="crispEdges"><path d="M5 6.5v10.5l5.7-5.25z" fill="#008080" stroke="#000" stroke-width="1" stroke-linejoin="miter"/><path d="M11 6.5v10.5l5.7-5.25z" fill="#008080" stroke="#000" stroke-width="1" stroke-linejoin="miter"/></svg>
<svg style="left:542px;top:42px" width="23" height="23" viewBox="0 0 23 23" shape-rendering="crispEdges"><rect x="4" y="6" width="1" height="11" fill="#000"/><path d="M11 6.5v10.5l-5.7-5.25z" fill="#008080" stroke="#000" stroke-width="1" stroke-linejoin="miter"/><path d="M17 6.5v10.5l-5.7-5.25z" fill="#008080" stroke="#000" stroke-width="1" stroke-linejoin="miter"/></svg>
<svg style="left:565px;top:42px" width="23" height="23" viewBox="0 0 23 23" shape-rendering="crispEdges"><path d="M5 6.5v10.5l5.7-5.25z" fill="#008080" stroke="#000" stroke-width="1" stroke-linejoin="miter"/><path d="M11 6.5v10.5l5.7-5.25z" fill="#008080" stroke="#000" stroke-width="1" stroke-linejoin="miter"/><rect x="17" y="6" width="1" height="11" fill="#000"/></svg>
<svg style="left:593px;top:42px" width="23" height="23" viewBox="0 0 23 23" shape-rendering="crispEdges"><path d="M8.5 5.5h9l-3 5h-9z" fill="#fff" stroke="#000"/><path d="M9.5 7.5h5M8.5 9h4" stroke="#000" stroke-width=".8"/><path d="M4.500 10.500h12l2.500-2.500v7l-2.500 3.500h-10.500l-1.500-2z" fill="#d4d0c8" stroke="#000"/><rect x="5" y="11" width="11" height="1.500" fill="#000"/><rect x="5" y="14" width="11" height="2" fill="#f4f0e8"/><rect x="10" y="15" width="3" height="1" fill="#ffff00"/><path d="M5 16.500h12M16.500 11v7" stroke="#000"/></svg>
<div style="left:0px;top:785px;width:1152px;height:1px;background:#000"></div>
<div class="face" style="left:0px;top:786px;width:1152px;height:78px;"></div>
<div style="left:0px;top:786px;width:1152px;height:1px;background:#fff"></div>
<div class="btn" style="left:5px;top:789px;width:79px;height:22px;"><span style="left:0;right:3px;top:2px;text-align:center;letter-spacing:-.18px">[F1] Справка</span></div>
<div class="btn" style="left:89px;top:789px;width:68px;height:22px;"><span style="left:0;right:3px;top:2px;text-align:center;letter-spacing:-.18px">[F7] Новая</span></div>
<div class="btn" style="left:162px;top:789px;width:80px;height:22px;"><span style="left:0;right:3px;top:2px;text-align:center;letter-spacing:-.18px">[Enter] Выбор</span></div>
<div class="btn" style="left:247px;top:789px;width:77px;height:22px;"><span style="left:0;right:3px;top:2px;text-align:center;letter-spacing:-.18px">[Esc] Выход</span></div>
<div class="sunk" style="left:0px;top:815px;width:100px;height:19px;"></div>
<div class="sunk" style="left:102px;top:815px;width:1050px;height:19px;"><span style="left:0;top:1px;letter-spacing:-.09px">Наименование подразделения</span></div>
<div style="left:0px;top:835px;width:1152px;height:1px;background:#fff"></div>
<div class="btn" style="left:2px;top:838px;width:52px;height:22px;"><span class="tb" style="left:19px;top:3px;letter-spacing:0">Пуск</span></div>
<svg style="left:4px;top:840px" width="17" height="16" viewBox="0 0 17 16"><path d="M2.6 1.6C4.5.4 6.8.6 8.8 1.8L7.6 6.4C5.8 5.3 3.4 5.2 1.4 6.3z" fill="#f0501c"/><path d="M9.6 2.2c2 1.2 4 1.2 5.8.1L14 7.600c-1.800 1.100-3.800 1-5.600-.2z" fill="#70c818"/><path d="M1.200 7.100C3.100 6 5.400 6.100 7.400 7.300L6.100 12.300C4.200 11.100 2 11 0 12.100z" fill="#3468e0"/><path d="M8.200 7.900c1.900 1.200 3.900 1.300 5.700.2l-1.300 5c-1.800 1.100-3.800 1-5.700-.2z" fill="#ffd010"/></svg>
<div class="track" style="left:58px;top:838px;width:160px;height:22px;border:1px solid;border-color:#404040 #fff #fff #404040;box-shadow:inset 1px 1px 0 #808080"><span class="tb" style="left:23px;top:4px;letter-spacing:-.17px">ГАЛАКТИКА - 7.11 - У...</span></div>
<svg style="left:63px;top:842px" width="16" height="16" viewBox="0 0 16 16"><defs><linearGradient id="g1" x1="0" x2="1" y1="0" y2="0"><stop offset="0" stop-color="#0404c0"/><stop offset="1" stop-color="#ffffff"/></linearGradient><linearGradient id="g1b" x1="0" x2="1" y1="0" y2="0"><stop offset="0" stop-color="#ffffff"/><stop offset="1" stop-color="#9898e0"/></linearGradient></defs><rect width="16" height="16" fill="url(#g1)"/><path d="M0 10C3 7.200 6.500 5.300 10 5L10 8.600C6.500 9 3.500 10.200 .5 12.800L0 12.800z" fill="url(#g1b)"/><path d="M9.500 5.200C11.500 4.800 13.500 6 16 8L14.200 11C12.500 9.500 11 8.800 9.500 8.800z" fill="#0404b8"/></svg>
<div class="btn" style="left:221px;top:838px;width:160px;height:22px;"><span style="left:23px;top:3px">Информационно-техно...</span></div>
<div class="btn" style="left:384px;top:838px;width:160px;height:22px;"><span style="left:23px;top:3px">Документ1 - Microsoft ...</span></div>
<div class="btn" style="left:547px;top:838px;width:160px;height:22px;"><span style="left:23px;top:3px">Adobe Reader - [МУ по ...</span></div>
<svg style="left:225px;top:841px" width="16" height="15" viewBox="0 0 16 15"><path d="M1 2.500c0-1 .5-1.500 1.500-1.500h3.500l1.500 2h5.500c1 0 1.500.5 1.500 1.500v7.500c0 1-.5 1.500-1.500 1.500h-10.500c-1 0-1.500-.5-1.500-1.500z" fill="#f8e088" stroke="#d0a020"/><path d="M2.500 6c.2-.7.600-1 1.300-1h10.700v6.500c0 1-.5 1.500-1.500 1.500h-11z" fill="#fff0a8" stroke="#d8a828" stroke-width=".8"/></svg>
<svg style="left:388px;top:841px" width="17" height="17" viewBox="0 0 17 17"><path d="M4.500.5h8l3 3v12h-11z" fill="#d4e4fa" stroke="#4a78c8"/><path d="M12.500.5v3h3" fill="#fff" stroke="#4a78c8" stroke-width=".8"/><path d="M7 12.500h6M7 14h5" stroke="#88a8e0" stroke-width=".8"/><rect x=".5" y="1.500" width="9" height="9" fill="#fff" stroke="#2858c8" stroke-width="1.200"/><text x="1.200" y="9.300" font-family="Liberation Serif,serif" font-weight="bold" font-style="italic" font-size="9" fill="#102880" textLength="8" lengthAdjust="spacingAndGlyphs">W</text></svg>
<svg style="left:552px;top:842px" width="14" height="14" viewBox="0 0 14 14"><rect width="14" height="14" fill="#fff"/><path d="M7.500 0h4.500l1.500 14h-7.500z" fill="#f01808"/><path d="M.3 4.800C3 4.200 6 2.500 8 .3M.3 7.200C1.500 9.500 2.500 12 3.300 14" fill="none" stroke="#e83010" stroke-width="1.300"/></svg>
<div style="left:1039px;top:842px;width:12px;height:16px;background:#0a246a;overflow:hidden"><span class="w" style="left:1px;top:1px;font-size:11px;letter-spacing:0">RU</span></div>
<div class="sunk" style="left:1055px;top:838px;width:95px;height:23px;"></div>
<span class="t" style="left:1114px;top:843px;">12:30</span>
<span class="t" style="left:1060px;top:843px;font-weight:bold;font-size:15px;letter-spacing:0;-webkit-text-stroke:.4px #000;font-family:'DejaVu Sans','Liberation Sans',sans-serif">«</span>
<svg style="left:1073px;top:842px" width="15" height="15" viewBox="0 0 15 15"><rect x="6" y="0.500" width="7" height="6.500" fill="#383868" stroke="#90a0e0" stroke-width=".8"/><path d="M7 8.500h5l1 2h-7z" fill="#a8b0ec"/><rect x="1" y="3.500" width="7" height="7" fill="#383868" stroke="#98b0f0" stroke-width=".8"/><path d="M1.500 11.500h6l1.500 2.500h-9z" fill="#a8b0ec"/><ellipse cx="3.500" cy="13" rx="3" ry="1.200" fill="#d0d8f8"/></svg>
<svg style="left:1090px;top:842px" width="16" height="15" viewBox="0 0 16 15"><path d="M1 .5h5v6l4-6h5l-10 13h-4z" fill="#ff0010" stroke="#fff" stroke-width="1"/><path d="M14 13.500h-5.500l2-2-3-3 1.500-1.500 3 3 2-2z" fill="#000" stroke="#fff" stroke-width=".7"/></svg>
<div class="win" style="left:157px;top:74px;width:714px;height:640px;"></div>
<div style="left:161px;top:78px;width:706px;height:18px;background:linear-gradient(90deg,#808080 0,#c0c0c0 654px)"></div>
<svg style="left:163px;top:79px" width="16" height="16" viewBox="0 0 16 16"><defs><linearGradient id="g2" x1="0" x2="1" y1="0" y2="0"><stop offset="0" stop-color="#0404c0"/><stop offset="1" stop-color="#ffffff"/></linearGradient><linearGradient id="g2b" x1="0" x2="1" y1="0" y2="0"><stop offset="0" stop-color="#ffffff"/><stop offset="1" stop-color="#9898e0"/></linearGradient></defs><rect width="16" height="16" fill="url(#g2)"/><path d="M0 10C3 7.200 6.500 5.300 10 5L10 8.600C6.500 9 3.500 10.200 .5 12.800L0 12.800z" fill="url(#g2b)"/><path d="M9.500 5.200C11.500 4.800 13.500 6 16 8L14.200 11C12.500 9.500 11 8.800 9.500 8.800z" fill="#0404b8"/></svg>
<span class="tb" style="left:181px;top:80px;color:#d4d0c8;letter-spacing:2.82px">Организации и банки</span><span class="tb" style="left:357px;top:80px;color:#d4d0c8;letter-spacing:.13px">(всего: 2)</span>
<div class="btn" style="left:815px;top:80px;width:16px;height:14px;"><svg style="left:0;top:0" width="14" height="12" viewBox="0 0 14 12" shape-rendering="crispEdges"><rect x="3" y="8" width="6" height="2" fill="#000"/></svg></div>
<div class="btn" style="left:831px;top:80px;width:16px;height:14px;"><svg style="left:0;top:0" width="14" height="12" viewBox="0 0 14 12" shape-rendering="crispEdges"><path d="M2 1h9v9h-9z M3 3v6h7v-6z" fill="#000" fill-rule="evenodd"/></svg></div>
<div class="btn" style="left:849px;top:80px;width:16px;height:14px;"><svg style="left:0;top:0" width="14" height="12" viewBox="0 0 14 12" shape-rendering="crispEdges"><rect x="3" y="2" width="2" height="1" fill="#000"/><rect x="9" y="2" width="2" height="1" fill="#000"/><rect x="4" y="3" width="2" height="1" fill="#000"/><rect x="8" y="3" width="2" height="1" fill="#000"/><rect x="5" y="4" width="4" height="1" fill="#000"/><rect x="6" y="5" width="2" height="1" fill="#000"/><rect x="5" y="6" width="4" height="1" fill="#000"/><rect x="4" y="7" width="2" height="1" fill="#000"/><rect x="8" y="7" width="2" height="1" fill="#000"/><rect x="3" y="8" width="2" height="1" fill="#000"/><rect x="9" y="8" width="2" height="1" fill="#000"/></svg></div>
<div class="bd" style="left:161px;top:97px;width:706px;height:613px;"></div>
<div style="left:161px;top:97px;width:706px;height:1px;background:#d4d0c8"></div>
<div style="left:161px;top:98px;width:689px;height:1px;background:#fff"></div>
<div class="hd" style="left:162px;top:99px;width:688px;height:16px;"></div>
<div style="left:162px;top:98px;width:1px;height:17px;background:#fff"></div>
<div style="left:162px;top:115px;width:688px;height:1px;background:#808080"></div>
<div style="left:178px;top:98px;width:1px;height:18px;background:#808080"></div><div style="left:179px;top:98px;width:2px;height:18px;background:#c0c0c0"></div><div style="left:181px;top:98px;width:1px;height:18px;background:#fff"></div>
<div style="left:179px;top:116px;width:1px;height:235px;background:#808080"></div><div style="left:180px;top:116px;width:1px;height:235px;background:#fff"></div>
<div style="left:229px;top:98px;width:1px;height:18px;background:#808080"></div><div style="left:230px;top:98px;width:2px;height:18px;background:#c0c0c0"></div><div style="left:232px;top:98px;width:1px;height:18px;background:#fff"></div>
<div style="left:230px;top:116px;width:1px;height:235px;background:#808080"></div><div style="left:231px;top:116px;width:1px;height:235px;background:#fff"></div>
<div style="left:663px;top:98px;width:1px;height:18px;background:#808080"></div><div style="left:664px;top:98px;width:2px;height:18px;background:#c0c0c0"></div><div style="left:666px;top:98px;width:1px;height:18px;background:#fff"></div>
<div style="left:664px;top:116px;width:1px;height:235px;background:#808080"></div><div style="left:665px;top:116px;width:1px;height:235px;background:#fff"></div>
<div style="left:830px;top:98px;width:1px;height:18px;background:#808080"></div><div style="left:831px;top:98px;width:2px;height:18px;background:#c0c0c0"></div><div style="left:833px;top:98px;width:1px;height:18px;background:#fff"></div>
<div style="left:831px;top:116px;width:1px;height:235px;background:#808080"></div><div style="left:832px;top:116px;width:1px;height:235px;background:#fff"></div>
<span class="t w" style="left:183px;top:100px;">Номер</span>
<span class="t w" style="left:233px;top:100px;">Наименование организации</span>
<span class="t w" style="left:669px;top:100px;letter-spacing:-.4px">УНН/ИНН</span>
<div style="left:836px;top:104px;width:6px;height:7px;border:1px solid #fff"></div>
<span class="t" style="left:235px;top:117px;letter-spacing:.13px">Введите наименование своей организации</span>
<span class="t" style="left:233px;top:133px;">1</span>
<div style="left:181px;top:148px;width:49px;height:16px;background:#f8f8f8;border:1px solid;border-color:#808080 #fff #fff #808080"></div>
<div style="left:232px;top:148px;width:432px;height:16px;background:#f8f8f8;border:1px solid;border-color:#808080 #fff #fff #808080"></div>
<div style="left:666px;top:148px;width:165px;height:16px;background:#f8f8f8;border:1px solid;border-color:#808080 #fff #fff #808080"></div>
<div style="left:162px;top:148px;width:17px;height:16px;border:1px solid;border-color:#808080 #fff #fff #808080"></div>
<div style="left:833px;top:148px;width:17px;height:16px;border:1px solid;border-color:#808080 #fff #fff #808080"></div>
<span class="t" style="left:232px;top:149px;letter-spacing:.13px">Витязь  Папикян, Ситникова. ЭК-61 2 подр.</span>
<span class="t" style="left:667px;top:149px;">7726228454</span>
<span class="t" style="left:834px;top:117px;font-weight:bold">-</span>
<span class="t" style="left:834px;top:133px;font-weight:bold">-</span>
<span class="t" style="left:834px;top:149px;color:#000080;font-weight:bold">-</span>
<div class="track" style="left:850px;top:98px;width:16px;height:253px;"></div><div class="btn" style="left:850px;top:98px;width:16px;height:16px;"><svg style="left:0;top:0" width="14" height="14" viewBox="0 0 14 14" shape-rendering="crispEdges"><rect x="6" y="5" width="1" height="1" fill="#000"/><rect x="5" y="6" width="3" height="1" fill="#000"/><rect x="4" y="7" width="5" height="1" fill="#000"/><rect x="3" y="8" width="7" height="1" fill="#000"/></svg></div><div class="btn" style="left:850px;top:335px;width:16px;height:16px;"><svg style="left:0;top:0" width="14" height="14" viewBox="0 0 14 14" shape-rendering="crispEdges"><rect x="3" y="5" width="7" height="1" fill="#000"/><rect x="4" y="6" width="5" height="1" fill="#000"/><rect x="5" y="7" width="3" height="1" fill="#000"/><rect x="6" y="8" width="1" height="1" fill="#000"/></svg></div><div class="btn" style="left:850px;top:217px;width:16px;height:16px;"></div>
<div style="left:161px;top:351px;width:706px;height:1px;background:#fff"></div>
<div style="left:161px;top:352px;width:706px;height:1px;background:#d4d0c8"></div>
<div style="left:161px;top:353px;width:706px;height:1px;background:#fff"></div>
<div class="hd" style="left:163px;top:354px;width:111px;height:16px;"></div>
<div style="left:162px;top:353px;width:1px;height:17px;background:#fff"></div>
<div style="left:163px;top:370px;width:111px;height:1px;background:#808080"></div>
<span class="t w" style="left:164px;top:355px;">Группа</span>
<div style="left:162px;top:371px;width:112px;height:16px;background:#f8f8f8;border:1px solid;border-color:#808080 #fff #fff #808080"></div>
<span class="t" style="left:162px;top:372px;letter-spacing:.13px">Верхний уровень</span>
<div class="track" style="left:274px;top:353px;width:16px;height:356px;"></div><div class="btn" style="left:274px;top:353px;width:16px;height:16px;"><svg style="left:0;top:0" width="14" height="14" viewBox="0 0 14 14" shape-rendering="crispEdges"><rect x="6" y="5" width="1" height="1" fill="#000"/><rect x="5" y="6" width="3" height="1" fill="#000"/><rect x="4" y="7" width="5" height="1" fill="#000"/><rect x="3" y="8" width="7" height="1" fill="#000"/></svg></div><div class="btn" style="left:274px;top:693px;width:16px;height:16px;"><svg style="left:0;top:0" width="14" height="14" viewBox="0 0 14 14" shape-rendering="crispEdges"><rect x="3" y="5" width="7" height="1" fill="#000"/><rect x="4" y="6" width="5" height="1" fill="#000"/><rect x="5" y="7" width="3" height="1" fill="#000"/><rect x="6" y="8" width="1" height="1" fill="#000"/></svg></div><div class="btn" style="left:274px;top:524px;width:16px;height:16px;"></div>
<div style="left:290px;top:353px;width:1px;height:356px;background:#808080"></div>
<div style="left:586px;top:353px;width:1px;height:356px;background:#808080"></div><div style="left:587px;top:353px;width:1px;height:356px;background:#fff"></div>
<div style="left:718px;top:353px;width:1px;height:356px;background:#808080"></div><div style="left:719px;top:353px;width:1px;height:356px;background:#fff"></div>
<div class="track" style="left:850px;top:353px;width:16px;height:356px;"></div><div class="btn" style="left:850px;top:353px;width:16px;height:16px;"><svg style="left:0;top:0" width="14" height="14" viewBox="0 0 14 14" shape-rendering="crispEdges"><rect x="6" y="5" width="1" height="1" fill="#000"/><rect x="5" y="6" width="3" height="1" fill="#000"/><rect x="4" y="7" width="5" height="1" fill="#000"/><rect x="3" y="8" width="7" height="1" fill="#000"/></svg></div><div class="btn" style="left:850px;top:693px;width:16px;height:16px;"><svg style="left:0;top:0" width="14" height="14" viewBox="0 0 14 14" shape-rendering="crispEdges"><rect x="3" y="5" width="7" height="1" fill="#000"/><rect x="4" y="6" width="5" height="1" fill="#000"/><rect x="5" y="7" width="3" height="1" fill="#000"/><rect x="6" y="8" width="1" height="1" fill="#000"/></svg></div><div class="btn" style="left:850px;top:527px;width:16px;height:16px;"></div>
<div style="left:161px;top:709px;width:706px;height:1px;background:#fff"></div>
<div class="win" style="left:289px;top:176px;width:574px;height:500px;"></div>
<div style="left:293px;top:180px;width:566px;height:18px;background:linear-gradient(90deg,#0a246a 0,#a6caf0 514px)"></div>
<svg style="left:295px;top:181px" width="16" height="16" viewBox="0 0 16 16"><defs><linearGradient id="g3" x1="0" x2="1" y1="0" y2="0"><stop offset="0" stop-color="#0404c0"/><stop offset="1" stop-color="#ffffff"/></linearGradient><linearGradient id="g3b" x1="0" x2="1" y1="0" y2="0"><stop offset="0" stop-color="#ffffff"/><stop offset="1" stop-color="#9898e0"/></linearGradient></defs><rect width="16" height="16" fill="url(#g3)"/><path d="M0 10C3 7.200 6.500 5.300 10 5L10 8.600C6.500 9 3.500 10.200 .5 12.800L0 12.800z" fill="url(#g3b)"/><path d="M9.500 5.200C11.500 4.800 13.500 6 16 8L14.200 11C12.500 9.500 11 8.800 9.500 8.800z" fill="#0404b8"/></svg>
<span class="tb w" style="left:315px;top:182px;letter-spacing:.12px">Каталог подразделений</span>
<div class="btn" style="left:807px;top:182px;width:16px;height:14px;"><svg style="left:0;top:0" width="14" height="12" viewBox="0 0 14 12" shape-rendering="crispEdges"><rect x="3" y="8" width="6" height="2" fill="#000"/></svg></div>
<div class="btn" style="left:823px;top:182px;width:16px;height:14px;"><svg style="left:0;top:0" width="14" height="12" viewBox="0 0 14 12" shape-rendering="crispEdges"><path d="M2 1h9v9h-9z M3 3v6h7v-6z" fill="#000" fill-rule="evenodd"/></svg></div>
<div class="btn" style="left:841px;top:182px;width:16px;height:14px;"><svg style="left:0;top:0" width="14" height="12" viewBox="0 0 14 12" shape-rendering="crispEdges"><rect x="3" y="2" width="2" height="1" fill="#000"/><rect x="9" y="2" width="2" height="1" fill="#000"/><rect x="4" y="3" width="2" height="1" fill="#000"/><rect x="8" y="3" width="2" height="1" fill="#000"/><rect x="5" y="4" width="4" height="1" fill="#000"/><rect x="6" y="5" width="2" height="1" fill="#000"/><rect x="5" y="6" width="4" height="1" fill="#000"/><rect x="4" y="7" width="2" height="1" fill="#000"/><rect x="8" y="7" width="2" height="1" fill="#000"/><rect x="3" y="8" width="2" height="1" fill="#000"/><rect x="9" y="8" width="2" height="1" fill="#000"/></svg></div>
<div class="bd" style="left:293px;top:199px;width:566px;height:472px;"></div>
<div style="left:293px;top:199px;width:566px;height:1px;background:#d4d0c8"></div>
<div style="left:294px;top:200px;width:548px;height:1px;background:#fff"></div>
<div class="hd" style="left:294px;top:201px;width:548px;height:17px;"></div>
<div style="left:294px;top:200px;width:1px;height:18px;background:#fff"></div>
<div style="left:294px;top:218px;width:548px;height:1px;background:#808080"></div>
<div style="left:554px;top:200px;width:1px;height:19px;background:#808080"></div><div style="left:555px;top:200px;width:2px;height:19px;background:#c0c0c0"></div><div style="left:557px;top:200px;width:1px;height:19px;background:#fff"></div>
<div style="left:555px;top:219px;width:1px;height:452px;background:#808080"></div><div style="left:556px;top:219px;width:1px;height:452px;background:#fff"></div>
<div style="left:628px;top:200px;width:1px;height:19px;background:#808080"></div><div style="left:629px;top:200px;width:2px;height:19px;background:#c0c0c0"></div><div style="left:631px;top:200px;width:1px;height:19px;background:#fff"></div>
<div style="left:629px;top:219px;width:1px;height:452px;background:#808080"></div><div style="left:630px;top:219px;width:1px;height:452px;background:#fff"></div>
<div style="left:735px;top:200px;width:1px;height:19px;background:#808080"></div><div style="left:736px;top:200px;width:2px;height:19px;background:#c0c0c0"></div><div style="left:738px;top:200px;width:1px;height:19px;background:#fff"></div>
<div style="left:736px;top:219px;width:1px;height:452px;background:#808080"></div><div style="left:737px;top:219px;width:1px;height:452px;background:#fff"></div>
<span class="t" style="left:295px;top:202px;color:#ffff00">Наименование</span>
<span class="t w" style="left:559px;top:202px;">Код</span>
<span class="t w" style="left:633px;top:202px;">Тип</span>
<span class="t w" style="left:740px;top:202px;">Группа</span>
<div style="left:294px;top:219px;width:261px;height:15px;background:#fff"></div>
<div style="left:557px;top:218px;width:72px;height:16px;background:#f8f8f8;border:1px solid;border-color:#808080 #fff #fff #808080"></div>
<div style="left:631px;top:218px;width:105px;height:16px;background:#f8f8f8;border:1px solid;border-color:#808080 #fff #fff #808080"></div>
<div style="left:738px;top:218px;width:104px;height:16px;background:#f8f8f8;border:1px solid;border-color:#808080 #fff #fff #808080"></div>
<div style="left:739px;top:219px;width:103px;height:14px;background:repeating-linear-gradient(45deg,#0000ff 0,#0000ff .9px,#fff .9px,#fff 2.83px)"></div>
<div style="left:295px;top:219px;width:2px;height:14px;background:#000"></div>
<span class="t" style="left:294px;top:219px;">администрация</span>
<span class="t" style="left:557px;top:219px;">00001</span>
<span class="t" style="left:631px;top:219px;letter-spacing:.13px">подразделение</span>
<span class="t" style="left:294px;top:235px;letter-spacing:.1px">Производственный отдел</span>
<span class="t" style="left:557px;top:235px;">00002</span>
<span class="t" style="left:631px;top:235px;letter-spacing:.13px">подразделение</span>
<span class="t" style="left:294px;top:251px;letter-spacing:.1px">Производственный склад</span>
<span class="t" style="left:557px;top:251px;">00004</span>
<span class="t" style="left:631px;top:251px;letter-spacing:.13px">склад</span>
<span class="t" style="left:294px;top:267px;letter-spacing:.1px">Склад готовой продукции</span>
<span class="t" style="left:557px;top:267px;">00006</span>
<span class="t" style="left:631px;top:267px;letter-spacing:.13px">склад</span>
<span class="t" style="left:294px;top:283px;letter-spacing:.1px">Транспортный участок</span>
<span class="t" style="left:557px;top:283px;">00003</span>
<span class="t" style="left:631px;top:283px;letter-spacing:.13px">подразделение</span>
<span class="t" style="left:294px;top:299px;letter-spacing:.1px">Центральный склад</span>
<span class="t" style="left:557px;top:299px;">00005</span>
<span class="t" style="left:631px;top:299px;letter-spacing:.13px">склад</span>
<div class="track" style="left:842px;top:200px;width:16px;height:471px;"></div><div class="btn" style="left:842px;top:200px;width:16px;height:16px;"><svg style="left:0;top:0" width="14" height="14" viewBox="0 0 14 14" shape-rendering="crispEdges"><rect x="6" y="5" width="1" height="1" fill="#000"/><rect x="5" y="6" width="3" height="1" fill="#000"/><rect x="4" y="7" width="5" height="1" fill="#000"/><rect x="3" y="8" width="7" height="1" fill="#000"/></svg></div><div class="btn" style="left:842px;top:655px;width:16px;height:16px;"><svg style="left:0;top:0" width="14" height="14" viewBox="0 0 14 14" shape-rendering="crispEdges"><rect x="3" y="5" width="7" height="1" fill="#000"/><rect x="4" y="6" width="5" height="1" fill="#000"/><rect x="5" y="7" width="3" height="1" fill="#000"/><rect x="6" y="8" width="1" height="1" fill="#000"/></svg></div><div class="btn" style="left:842px;top:428px;width:16px;height:16px;"></div>
<div style="left:293px;top:671px;width:566px;height:1px;background:#fff"></div>
</body></html>
